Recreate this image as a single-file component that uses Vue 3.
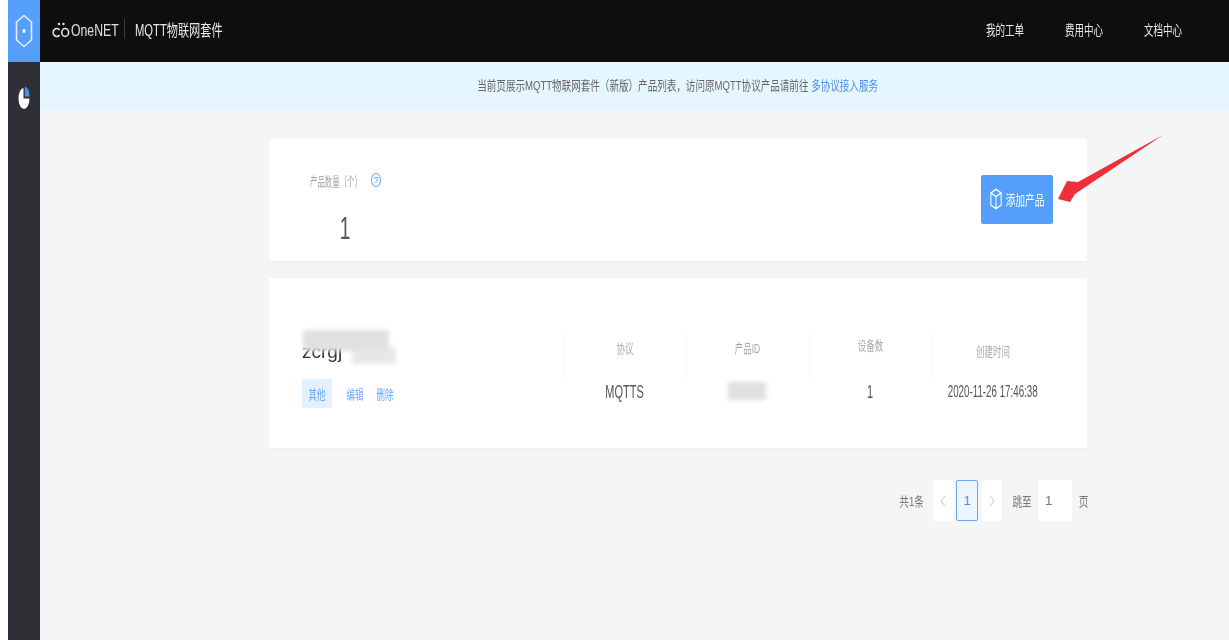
<script setup>
const stats = [
  { label: '协议', value: 'MQTTS', pos: '' },
  { label: '产品ID', value: '', masked: true, pos: '' },
  { label: '设备数', value: '1', pos: 'high' },
  { label: '创建时间', value: '2020-11-26 17:46:38', pos: 'low' }
]
const navLinks = ['我的工单', '费用中心', '文档中心']
</script>

<template>
  <div class="page">
    <aside class="side">
      <div class="side-logo">
        <svg width="18" height="34" viewBox="0 0 18 34">
          <path d="M9 1.5 L16.5 8 V26 L9 32.5 L1.5 26 V8 Z" fill="none" stroke="#e6f1ff" stroke-width="1.6" stroke-linejoin="round" />
          <ellipse cx="9" cy="17" rx="1.5" ry="2" fill="#fff" />
        </svg>
      </div>
      <div class="side-item">
        <svg width="12" height="24" viewBox="0 0 12 16" preserveAspectRatio="none">
          <path d="M5.5 2 A5.5 7 0 1 0 11.5 9 H5.5 Z" fill="#fff" />
          <path d="M6.8 1 A5 6 0 0 1 11.5 7.6 H6.8 Z" fill="#4a90e8" />
        </svg>
      </div>
    </aside>

    <div class="main">
      <header class="top">
        <div class="brand">
          <svg class="brand-mark" width="18" height="18" viewBox="0 0 18 18">
            <path d="M7.6 10 A3.6 4 0 1 0 7.6 15" fill="none" stroke="#e8e8e8" stroke-width="1.6" />
            <ellipse cx="13.2" cy="12.5" rx="3.4" ry="4" fill="none" stroke="#e8e8e8" stroke-width="1.6" />
            <circle cx="7" cy="4" r="1.2" fill="#e8e8e8" />
            <circle cx="11.5" cy="4" r="1.2" fill="#e8e8e8" />
          </svg>
          <span class="brand-name">OneNET</span>
          <i class="brand-sep"></i>
          <span class="brand-title">MQTT物联网套件</span>
        </div>
        <nav class="top-nav">
          <a v-for="link in navLinks" :key="link">{{ link }}</a>
        </nav>
      </header>

      <div class="notice">
        <span class="notice-text">当前页展示MQTT物联网套件（新版）产品列表，访问原MQTT协议产品请前往 <a>多协议接入服务</a></span>
      </div>

      <section class="content">
        <div class="card summary">
          <div class="count">
            <div class="count-label">
              <span class="label-text">产品数量（个）</span>
              <span class="help">?</span>
            </div>
            <div class="count-num">1</div>
          </div>
          <button class="add-btn">
            <svg width="12" height="22" viewBox="0 0 14 18" preserveAspectRatio="none">
              <path d="M7 1 L13 4 V14 L7 17 L1 14 V4 Z M1 4 L7 7 L13 4 M7 7 V17" fill="none" stroke="#fff" stroke-width="1.2" />
            </svg>
            <span class="add-text"><span class="sq">添加产品</span></span>
          </button>
        </div>

        <div class="card product">
          <div class="product-info">
            <div class="product-name">
              <span class="name-text">zcrgj</span>
              <i class="smudge name-smudge"></i>
              <i class="smudge name-smudge2"></i>
            </div>
            <div class="product-actions">
              <a class="active"><span class="sq">其他</span></a>
              <a class="gap"><span class="sq">编辑</span></a>
              <a><span class="sq">删除</span></a>
            </div>
          </div>
          <div class="stats">
            <div v-for="s in stats" :key="s.label" class="stat">
              <div class="stat-label" :class="s.pos"><span class="sq">{{ s.label }}</span></div>
              <div class="stat-value">
                <i v-if="s.masked" class="smudge id-smudge"></i>
                <span v-else class="sq">{{ s.value }}</span>
              </div>
            </div>
          </div>
        </div>

        <div class="pager">
          <span class="pg-text pg-total"><span class="sq">共1条</span></span>
          <span class="pg-btn prev">
            <svg width="6" height="12" viewBox="0 0 6 12"><path d="M5 1 L1 6 L5 11" fill="none" stroke="#c4c4c4" /></svg>
          </span>
          <span class="pg-btn pg-on">1</span>
          <span class="pg-btn next">
            <svg width="6" height="12" viewBox="0 0 6 12"><path d="M1 1 L5 6 L1 11" fill="none" stroke="#c4c4c4" /></svg>
          </span>
          <span class="pg-text pg-jump"><span class="sq">跳至</span></span>
          <span class="pg-input">1</span>
          <span class="pg-text pg-unit"><span class="sq">页</span></span>
        </div>
      </section>
    </div>

    <svg class="arrow" width="110" height="80" viewBox="0 0 110 80">
      <path d="M107 1 L22 48 L11 47 L2 65 L14 68 L19 60 Z" fill="#ee2f38" />
    </svg>
  </div>
</template>

<style>
html, body { margin: 0; background: #fff; }
</style>

<style scoped>
.page {
  position: relative;
  display: flex;
  height: 640px;
  padding-left: 8px;
  box-sizing: border-box;
  overflow: hidden;
  font-family: "Liberation Sans", "Noto Sans CJK SC", sans-serif;
  color: #666;
}

/* the reference is squeezed sideways, so text is narrowed inside fixed boxes */
.sq {
  display: inline-block;
  flex: none;
  white-space: nowrap;
  transform: scaleX(0.65);
}

.side {
  width: 32px;
  flex: none;
  background: #2f3036;
}
.side-logo {
  height: 62px;
  background: #559ffb;
  display: flex;
  align-items: center;
  justify-content: center;
}
.side-item {
  display: flex;
  justify-content: center;
  padding-top: 23px;
}

.main {
  flex: 1;
  min-width: 0;
  background: #f4f5f7;
  display: flex;
  flex-direction: column;
}

.top {
  height: 62px;
  flex: none;
  background: #0e0e0e;
  display: flex;
  align-items: center;
  justify-content: space-between;
  padding: 0 38px 4px 12px;
  box-sizing: border-box;
  color: #e8e8e8;
}
.brand {
  display: flex;
  align-items: center;
}
.brand-mark { margin-right: 1px; }
.brand-name {
  width: 47px;
  font-size: 17px;
  color: #e0e0e0;
  white-space: nowrap;
  transform: scaleX(0.72);
  transform-origin: left;
  padding-top: 3px;
}
.brand-sep {
  width: 1px;
  height: 20px;
  background: #3c3c3c;
  margin: 0 10px 0 6px;
}
.brand-title {
  font-size: 16px;
  white-space: nowrap;
  transform: scaleX(0.7);
  transform-origin: left;
}
.top-nav {
  display: flex;
  gap: 23px;
  font-size: 14px;
}
.top-nav a { transform: scaleX(0.68); }

.notice {
  height: 48px;
  flex: none;
  background: #e6f6ff;
  font-size: 13px;
  color: #666;
  display: flex;
  align-items: center;
  justify-content: center;
  padding: 0 0 3px 87px;
  box-sizing: border-box;
}
.notice-text {
  flex: none;
  white-space: pre;
  transform: scaleX(0.735);
}
.notice a { color: #4a90e2; }

.content {
  width: 818px;
  margin-left: 229px;
  padding-top: 29px;
  display: flex;
  flex-direction: column;
}

.card {
  background: #fff;
  box-shadow: 0 1px 2px rgba(0, 0, 0, 0.03);
}

.summary {
  height: 122px;
  display: flex;
  justify-content: space-between;
  align-items: center;
  padding: 0 34px 0 41px;
  box-sizing: border-box;
}
.count { margin-top: 13px; }
.count-label {
  display: flex;
  align-items: center;
  color: #a6a6a6;
  font-size: 13px;
}
.label-text {
  width: 52px;
  white-space: nowrap;
  transform: scaleX(0.57);
  transform-origin: left;
}
.help {
  width: 10px;
  height: 14px;
  border: 1px solid #6aa7f5;
  border-radius: 50%;
  margin-left: 9px;
  box-sizing: border-box;
  color: #4a90e2;
  font-size: 9px;
  line-height: 12px;
  text-align: center;
}
.count-num {
  width: 70px;
  font-size: 32px;
  line-height: 30px;
  color: #555;
  text-align: center;
  margin-top: 23px;
  transform: scaleX(0.6);
}
.add-btn {
  width: 72px;
  height: 49px;
  margin-top: -2px;
  border: 0;
  border-radius: 2px;
  background: #559ffb;
  color: #fff;
  font: inherit;
  font-size: 14px;
  display: flex;
  align-items: center;
  justify-content: center;
  gap: 3px;
  padding: 0;
}
.add-text {
  width: 39px;
  display: flex;
  justify-content: center;
}
.add-text .sq { transform: scaleX(0.7); }

.product {
  margin-top: 17px;
  height: 170px;
  display: flex;
  align-items: flex-start;
  padding: 54px 33px 0 33px;
  box-sizing: border-box;
}
.product-info {
  width: 261px;
  flex: none;
}
.product-name {
  position: relative;
  height: 47px;
  font-size: 19px;
  line-height: 40px;
  color: #333;
}
.name-text {
  display: inline-block;
  filter: blur(0.6px);
}
.smudge {
  display: block;
  background: #e0e0e0;
  filter: blur(2px);
}
.product-name .smudge { position: absolute; }
.name-smudge {
  left: 1px;
  top: -2px;
  width: 86px;
  height: 21px;
}
.name-smudge2 {
  left: 50px;
  top: 15px;
  width: 44px;
  height: 17px;
  opacity: 0.75;
}
.product-actions {
  display: flex;
  align-items: center;
  font-size: 13px;
  color: #6aa7f5;
}
.product-actions a {
  width: 30px;
  height: 29px;
  display: flex;
  align-items: center;
  justify-content: center;
}
.product-actions a.active { background: #e3f0fe; }
.product-actions a.gap { margin-left: 8px; }

.stats {
  flex: 1;
  display: flex;
}
.stat {
  flex: 1;
  min-width: 0;
  display: flex;
  flex-direction: column;
  align-items: center;
}
.stat-label {
  align-self: stretch;
  display: flex;
  justify-content: center;
  height: 48px;
  box-sizing: border-box;
  border-left: 1px solid #f7f7f7;
  font-size: 13px;
  color: #a9a9a9;
  line-height: 34px;
}
.stat-label.high { line-height: 28px; }
.stat-label.low { line-height: 40px; }
.stat-value {
  align-self: stretch;
  display: flex;
  justify-content: center;
  height: 24px;
  font-size: 18px;
  color: #555;
  line-height: 24px;
}
.stat:last-child .stat-value { font-size: 16px; }
.stat-value .sq { transform: scaleX(0.61); }
.id-smudge {
  width: 38px;
  height: 18px;
  margin-top: 2px;
}

.pager {
  display: flex;
  align-items: center;
  justify-content: flex-end;
  margin-top: 31px;
  font-size: 13px;
  color: #777;
  height: 43px;
}
.pg-text {
  display: flex;
  justify-content: center;
}
.pg-text .sq { transform: scaleX(0.74); }
.pg-total { width: 28px; }
.pg-btn {
  width: 20px;
  height: 41px;
  background: #fff;
  display: flex;
  align-items: center;
  justify-content: center;
  box-sizing: border-box;
}
.prev { margin-left: 7px; }
.pg-on {
  width: 22px;
  margin: 0 4px 0 3px;
  border: 1px solid #6aa7f5;
  border-radius: 2px;
  background: #edf5fe;
  color: #4a90e2;
}
.pg-jump {
  width: 17px;
  margin-left: 11px;
}
.pg-input {
  width: 34px;
  height: 41px;
  background: #fff;
  margin-left: 8px;
  padding-left: 7px;
  box-sizing: border-box;
  display: flex;
  align-items: center;
}
.pg-unit {
  width: 8px;
  margin-left: 7px;
}

.arrow {
  position: absolute;
  left: 1056px;
  top: 134px;
}
</style>
